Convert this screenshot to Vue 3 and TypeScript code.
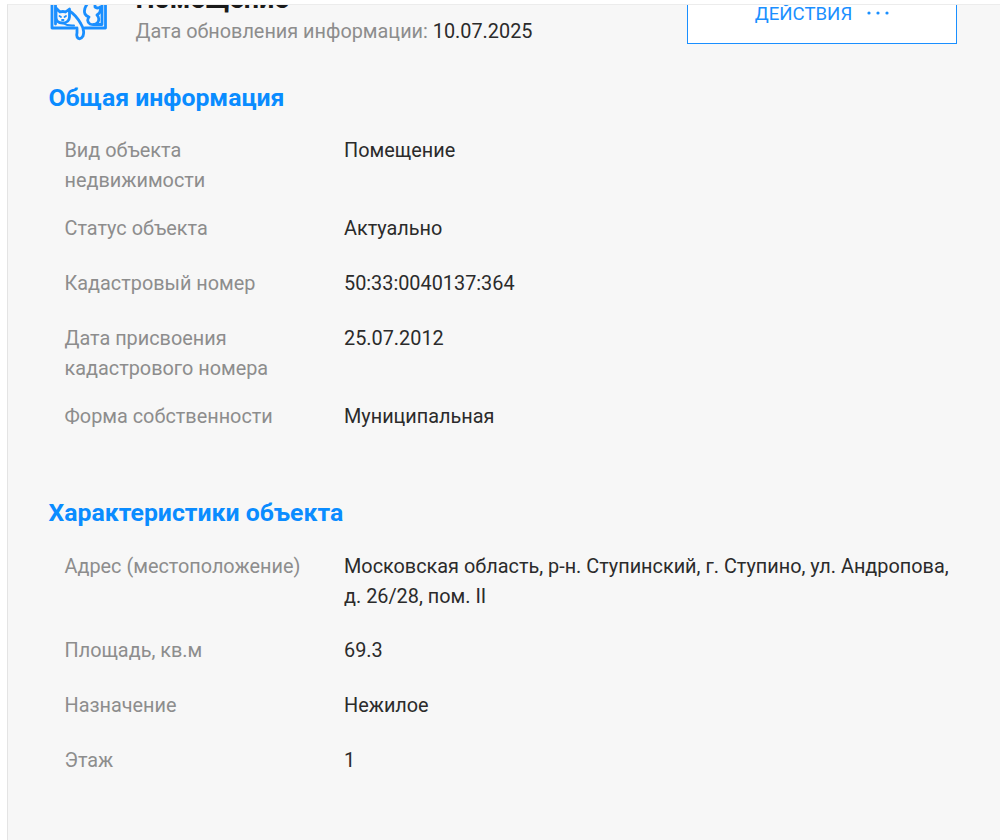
<script setup lang="ts">
interface Row { label: string; value: string }
const general: Row[] = [
  { label: 'Вид объекта недвижимости', value: 'Помещение' },
  { label: 'Статус объекта', value: 'Актуально' },
  { label: 'Кадастровый номер', value: '50:33:0040137:364' },
  { label: 'Дата присвоения кадастрового номера', value: '25.07.2012' },
  { label: 'Форма собственности', value: 'Муниципальная' },
]
const traits: Row[] = [
  { label: 'Адрес (местоположение)', value: 'Московская область, р-н. Ступинский, г. Ступино, ул. Андропова, д. 26/28, пом. II' },
  { label: 'Площадь, кв.м', value: '69.3' },
  { label: 'Назначение', value: 'Нежилое' },
  { label: 'Этаж', value: '1' },
]
</script>

<template>
  <div class="page">
    <main class="card">
      <header class="head">
        <svg class="icon" viewBox="0 5 58 36" fill="none" stroke="#1a8fff" stroke-width="2.8" stroke-linejoin="round" stroke-linecap="round">
          <path d="M2 0V28H25" />
          <path d="M5.5 0V24" />
          <path d="M55.5 0V28H35" />
          <path d="M52 0V24.500H44" />
          <path d="M6 8L10 12Q13 11 15.500 12L19.500 9V17Q19 23 12.500 23Q6 23 6 17Z" />
          <path d="M19.500 11Q26 15 31 24Q35 30 33 36Q31 39.500 28.500 38.500Q26 37 27 33V28" />
          <path d="M12.500 23Q17 26 24 25.500" stroke-width="2" />
          <path d="M9.500 16L11 17M16 16L14.500 17M12 20H13.500" stroke-width="1.800" />
          <path d="M38 3Q33 9 35 14Q36 16 39 17Q36 21 40 24Q45 26 48 22Q50 18 47 15Q52 12 50 7Q48 9 45 7V3" />
        </svg>
        <div class="titles">
          <h1 class="title">Помещение</h1>
          <p class="updated">Дата обновления информации: <span>10.07.2025</span></p>
        </div>
        <button class="actions" type="button">
          <span>ДЕЙСТВИЯ</span>
          <svg class="dots" viewBox="0 0 22 4" fill="#1a8fff"><circle cx="2" cy="2" r="1.6" /><circle cx="11" cy="2" r="1.6" /><circle cx="20" cy="2" r="1.6" /></svg>
        </button>
      </header>

      <section class="section first">
        <h2 class="heading">Общая информация</h2>
        <dl class="rows">
          <div v-for="r in general" :key="r.label" class="row">
            <dt class="label">{{ r.label }}</dt>
            <dd class="value">{{ r.value }}</dd>
          </div>
        </dl>
      </section>

      <section class="section second">
        <h2 class="heading">Характеристики объекта</h2>
        <dl class="rows">
          <div v-for="r in traits" :key="r.label" class="row">
            <dt class="label">{{ r.label }}</dt>
            <dd class="value">{{ r.value }}</dd>
          </div>
        </dl>
      </section>
    </main>
  </div>
</template>

<style>
html, body { margin: 0; background: #fff; }
</style>

<style scoped>
.page {
  height: 840px;
  overflow: hidden;
  padding: 4px 0 0 7px;
  box-sizing: border-box;
  font-family: Roboto, "Liberation Sans", sans-serif;
}
.card {
  height: 836px;
  overflow: hidden;
  box-sizing: border-box;
  background: #f7f7f7;
  border-left: 1px solid #e4e4e4;
  border-top: 1px solid #ececec;
  padding: 0 43px 0 41px;
}
.head {
  display: flex;
  align-items: flex-start;
  height: 38px;
}
.icon {
  width: 58px;
  height: 36px;
  margin-left: 1px;
  flex: none;
}
.titles {
  margin-left: 27.5px;
  flex: 1;
  margin-top: -23px;
}
.title {
  margin: 0;
  font-size: 27px;
  line-height: 34px;
  font-weight: 700;
  color: #1a1a1a;
}
.updated {
  margin: 1px 0 0;
  font-size: 19.85px;
  line-height: 30px;
  color: #8d8d8d;
}
.updated span { color: #2b2b2b; }
.actions {
  width: 270px;
  height: 40px;
  margin-top: -1px;
  padding: 0 0 20px;
  box-sizing: border-box;
  display: flex;
  align-items: flex-end;
  justify-content: center;
  gap: 15px;
  background: #fff;
  border: 1px solid #1a8fff;
  border-top: 0;
  color: #1a8fff;
  font: 400 18.6px/18px Roboto, "Liberation Sans", sans-serif;
}
.dots {
  width: 22px;
  height: 4px;
  margin-bottom: 8px;
}
.section.first { margin-top: 39.5px; }
.section.second { margin-top: 41.8px; }
.heading {
  margin: 0 0 23.7px -0.5px;
  font-size: 24.8px;
  line-height: 30px;
  font-weight: 700;
  color: #0a8cff;
}
.rows { margin: 0; padding-left: 15.500px; }
.row {
  display: grid;
  grid-template-columns: 279.500px 1fr;
}
.label {
  font-size: 19.85px;
  line-height: 30px;
  color: #8d8d8d;
  padding-right: 30px;
  padding-bottom: 18px;
}
.value {
  margin: 0;
  font-size: 19.85px;
  line-height: 30px;
  color: #2b2b2b;
  padding-bottom: 24.7px;
}
</style>
